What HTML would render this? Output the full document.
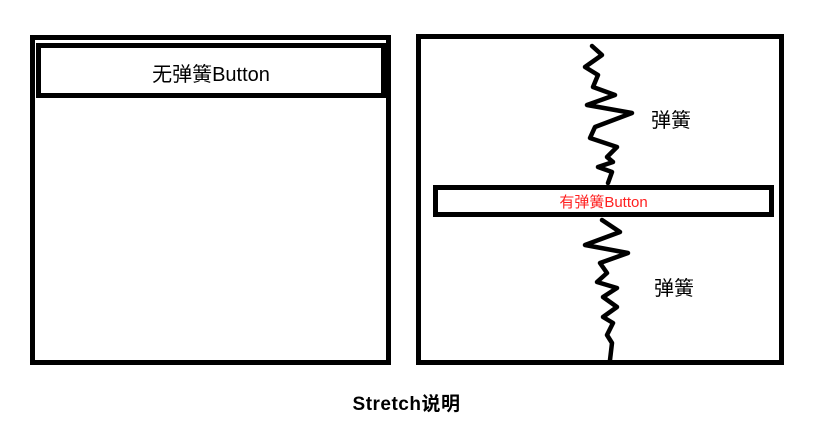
<!DOCTYPE html>
<html><head><meta charset="utf-8"><style>
body{margin:0;background:#fff;width:823px;height:428px;overflow:hidden;position:relative;font-family:"Liberation Sans","Noto Sans CJK SC",sans-serif}
.b{position:absolute;border:5px solid #000;box-sizing:border-box}
.t{position:absolute;white-space:nowrap}
</style></head><body>
<div class="b" style="left:30px;top:35px;width:361px;height:330px"></div>
<div class="b" style="left:36px;top:43px;width:350px;height:55px"></div>
<div class="t" style="left:36px;width:350px;top:58px;text-align:center;font-size:20px;color:#000">无弹簧Button</div>
<div class="b" style="left:416px;top:34px;width:368px;height:331px"></div>
<svg width="823" height="428" style="position:absolute;left:0;top:0">
<g fill="none" stroke="#000" stroke-width="4.5" stroke-linejoin="round" stroke-linecap="round">
<polyline points="592,46 602,55 585,67 598,75 593,87 615,95 587,105 632,113 595,127 590,138 617,147 607,157 613,162 598,167 612,172 608,183"/>
<polyline points="602,220 620,232 585,245 628,253 600,263 607,273 597,282 617,288 603,297 617,307 603,317 613,323 607,335 612,343 610,360"/>
</g></svg>
<div class="b" style="left:433px;top:185px;width:341px;height:32px"></div>
<div class="t" style="left:433px;width:341px;top:191px;text-align:center;font-size:15px;color:#ff2020">有弹簧Button</div>
<div class="t" style="left:651px;top:104px;font-size:20px">弹簧</div>
<div class="t" style="left:654px;top:272px;font-size:20px">弹簧</div>
<div class="t" style="left:0;width:813px;top:389px;text-align:center;font-size:19px;font-weight:bold;letter-spacing:0.5px">Stretch说明</div>
</body></html>
